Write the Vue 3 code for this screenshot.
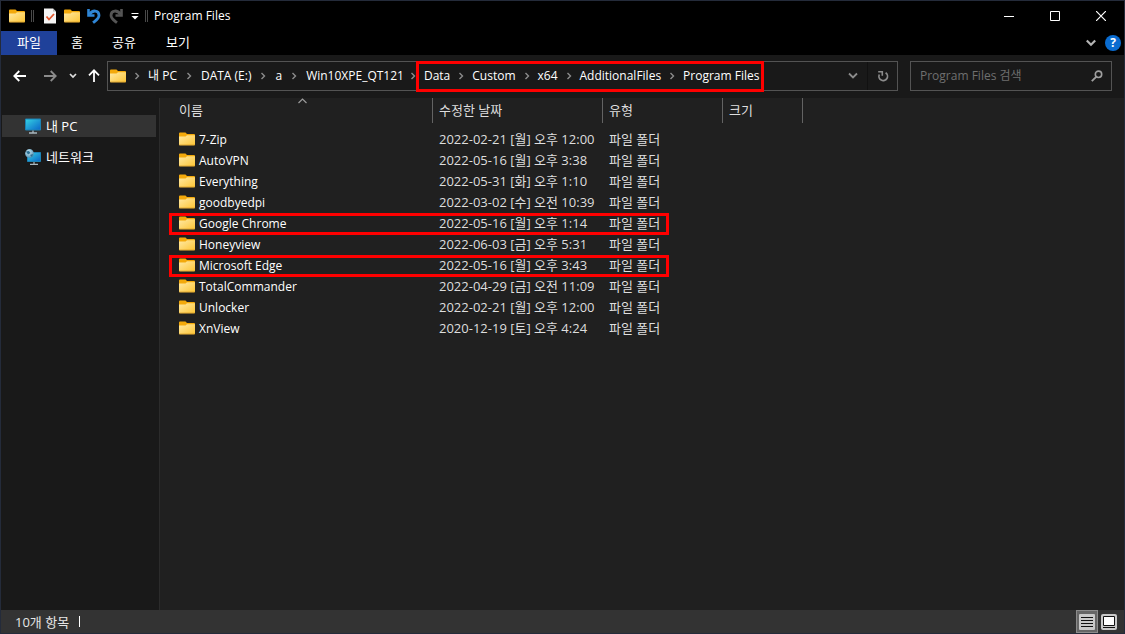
<script setup>
import { ref } from 'vue'

const rootCrumbs = ['내 PC', 'DATA (E:)', 'a', 'Win10XPE_QT121']
const markedCrumbs = ['Data', 'Custom', 'x64', 'AdditionalFiles', 'Program Files']

const tabs = [
  { name: '홈', cls: 'tab-home' },
  { name: '공유', cls: 'tab-share' },
  { name: '보기', cls: 'tab-view' },
]

const files = [
  { name: '7-Zip', date: '2022-02-21 [월] 오후 12:00' },
  { name: 'AutoVPN', date: '2022-05-16 [월] 오후 3:38' },
  { name: 'Everything', date: '2022-05-31 [화] 오후 1:10' },
  { name: 'goodbyedpi', date: '2022-03-02 [수] 오전 10:39' },
  { name: 'Google Chrome', date: '2022-05-16 [월] 오후 1:14', marked: true },
  { name: 'Honeyview', date: '2022-06-03 [금] 오후 5:31' },
  { name: 'Microsoft Edge', date: '2022-05-16 [월] 오후 3:43', marked: true },
  { name: 'TotalCommander', date: '2022-04-29 [금] 오전 11:09' },
  { name: 'Unlocker', date: '2022-02-21 [월] 오후 12:00' },
  { name: 'XnView', date: '2020-12-19 [토] 오후 4:24' },
]

const query = ref('')
</script>

<template>
  <div class="window">
    <svg class="defs" width="0" height="0" aria-hidden="true">
      <defs>
        <linearGradient id="folderFront" x1="0" y1="0" x2="1" y2="1">
          <stop offset="0" stop-color="#ffe9a4" />
          <stop offset="1" stop-color="#fdc535" />
        </linearGradient>
        <linearGradient id="screen" x1="0" y1="0" x2="1" y2="1">
          <stop offset="0" stop-color="#35d3e3" />
          <stop offset="1" stop-color="#0a66c8" />
        </linearGradient>
        <radialGradient id="globe" cx="0.4" cy="0.35" r="0.7">
          <stop offset="0" stop-color="#d5ecf5" />
          <stop offset="1" stop-color="#4389ae" />
        </radialGradient>
        <symbol id="folder" viewBox="0 0 16 14">
          <path d="M0 1.500a1 1 0 0 1 1-1h5.500l1.500 1.500H15a1 1 0 0 1 1 1V6H0z" fill="#f3a90b" />
          <path d="M0 4.500h6.500l1.500-1.300H16V12.500a.8.8 0 0 1-.8.8H.8a.8.8 0 0 1-.8-.8z" fill="url(#folderFront)" />
          <path d="M0.300 13h15.400" stroke="#dba02a" stroke-width="0.800" />
        </symbol>
        <symbol id="crumb" viewBox="0 0 6 8">
          <path d="M1.500 1l3 3-3 3" fill="none" stroke="#8c8c8c" stroke-width="1.400" />
        </symbol>
      </defs>
    </svg>

    <header class="titlebar">
      <svg class="folder" viewBox="0 0 16 14"><use href="#folder" /></svg>
      <span class="grip first"></span>
      <div class="quick">
        <button aria-label="속성">
          <svg width="14" height="16" viewBox="0 0 14 16">
            <path d="M1 0.500h9l3 3V15.500H1z" fill="#f4f4f4" />
            <path d="M10 0.500v3h3z" fill="#b9b9b9" />
            <path d="M3.500 8.500l2.500 3L11 6" fill="none" stroke="#e2562c" stroke-width="1.800" />
          </svg>
        </button>
        <button aria-label="새 폴더"><svg class="folder" viewBox="0 0 16 14"><use href="#folder" /></svg></button>
        <button aria-label="실행 취소">
          <svg width="14" height="16" viewBox="0 0 14 16" fill="none" stroke="#2f86d6" stroke-width="2.800">
            <path d="M1.500 1v6.500h6" stroke-width="2.600" />
            <path d="M2.500 6.500C5.500 1.500 11.800 2 12 7.200c.1 3.300-2.500 4.800-6 7.500" />
          </svg>
        </button>
        <button aria-label="다시 실행">
          <svg width="14" height="16" viewBox="0 0 14 16" fill="none" stroke="#555" stroke-width="2.800">
            <path d="M12.500 1v6.500h-6" stroke-width="2.600" />
            <path d="M11.500 6.500C8.500 1.500 2.200 2 2 7.200c-.1 3.300 2.500 4.800 6 7.500" />
          </svg>
        </button>
        <button class="more" aria-label="빠른 실행 도구 모음 사용자 지정">
          <svg width="8" height="8" viewBox="0 0 8 8"><path d="M0.500 1.500h7" stroke="#fff" /><path d="M0.500 4h7L4 7.500z" fill="#fff" /></svg>
        </button>
      </div>
      <span class="grip"></span>
      <h1>Program Files</h1>
      <div class="controls">
        <button aria-label="최소화"><svg width="10" height="10" viewBox="0 0 10 10"><path d="M0 5.500h10" stroke="#fff" /></svg></button>
        <button aria-label="최대화"><svg width="10" height="10" viewBox="0 0 10 10"><path d="M0.500 0.500h9v9h-9z" fill="none" stroke="#fff" /></svg></button>
        <button aria-label="닫기"><svg width="10" height="10" viewBox="0 0 10 10"><path d="M0 0l10 10M10 0L0 10" stroke="#fff" stroke-width="1.200" /></svg></button>
      </div>
    </header>

    <nav class="ribbon">
      <button class="tab tab-file">파일</button>
      <button v-for="t in tabs" :key="t.name" class="tab" :class="t.cls">{{ t.name }}</button>
      <div class="ribbon-end">
        <button aria-label="리본 확장"><svg width="10" height="8" viewBox="0 0 10 8"><path d="M0.800 1.500L5 5.700l4.200-4.200" fill="none" stroke="#b4b4b4" stroke-width="2.200" /></svg></button>
        <button class="help" aria-label="도움말">?</button>
      </div>
    </nav>

    <div class="navbar">
      <div class="arrows">
        <button aria-label="뒤로"><svg width="14" height="12" viewBox="0 0 14 12"><path d="M13 6H1.500M6.300 1L1.300 6l5 5" fill="none" stroke="#fff" stroke-width="1.800" /></svg></button>
        <button aria-label="앞으로"><svg width="14" height="12" viewBox="0 0 14 12"><path d="M1 6h11.500M7.700 1l5 5-5 5" fill="none" stroke="#8b8b8b" stroke-width="1.800" /></svg></button>
        <button aria-label="최근 위치"><svg width="8" height="6" viewBox="0 0 8 6"><path d="M1 1l3 3 3-3" fill="none" stroke="#dedede" stroke-width="1.700" /></svg></button>
        <button aria-label="위로"><svg width="12" height="14" viewBox="0 0 12 14"><path d="M6 13V1.500M1 6.300l5-5 5 5" fill="none" stroke="#fff" stroke-width="1.800" /></svg></button>
      </div>
      <div class="address">
        <svg class="folder" viewBox="0 0 16 14"><use href="#folder" /></svg>
        <template v-for="(c, i) in rootCrumbs" :key="c">
          <svg class="sep" :class="{ wide: i }"><use href="#crumb" /></svg>
          <a href="#">{{ c }}</a>
        </template>
        <svg class="sep last"><use href="#crumb" /></svg>
        <div class="marked-path">
          <template v-for="(c, i) in markedCrumbs" :key="c">
            <svg v-if="i" class="sep"><use href="#crumb" /></svg>
            <a href="#">{{ c }}</a>
          </template>
        </div>
        <button class="drop" aria-label="이전 위치"><svg width="10" height="8" viewBox="0 0 10 8"><path d="M1 1.500l4 4 4-4" fill="none" stroke="#8c8c8c" stroke-width="1.800" /></svg></button>
        <button class="refresh" aria-label="새로 고침">
          <svg width="12" height="12" viewBox="0 0 12 12"><path d="M8.600 2.700A4.300 4.300 0 1 1 2.300 4.500" fill="none" stroke="#8c8c8c" stroke-width="1.700" /><path d="M1.200 1.700h4.100V5.800" fill="none" stroke="#8c8c8c" stroke-width="1.600" /></svg>
        </button>
      </div>
      <div class="search">
        <input v-model="query" type="text" placeholder="Program Files 검색" aria-label="Program Files 검색" />
        <svg width="12" height="12" viewBox="0 0 12 12"><circle cx="7.500" cy="4.300" r="3.200" fill="none" stroke="#a0a0a0" stroke-width="1.600" /><path d="M5.200 6.800L0.800 11.200" stroke="#a0a0a0" stroke-width="1.900" /></svg>
      </div>
    </div>

    <div class="body">
      <aside>
        <a href="#" class="place selected">
          <svg width="16" height="16" viewBox="0 0 16 16">
            <path d="M0.500 1h15v11H0.500z" fill="url(#screen)" stroke="#1c82b4" />
            <path d="M8 12.500v2M4 15h8" stroke="#a9b8c0" stroke-width="1.300" />
          </svg>
          내 PC
        </a>
        <a href="#" class="place">
          <svg width="16" height="16" viewBox="0 0 16 16">
            <path d="M2.500 3.500h13v9h-13z" fill="url(#screen)" stroke="#1c82b4" />
            <path d="M9 13v2M5 15.300h8" stroke="#a9b8c0" stroke-width="1.200" />
            <circle cx="4.500" cy="4.500" r="4.400" fill="url(#globe)" />
            <path d="M1 2.500l3-.5 1.500 2L3 5.500zM5 6l3-1-1 3z" fill="#2a6d91" />
          </svg>
          네트워크
        </a>
      </aside>
      <main>
        <svg class="sort" width="9" height="6" viewBox="0 0 9 6"><path d="M0.500 5l4-4 4 4" fill="none" stroke="#9a9a9a" stroke-width="1.200" /></svg>
        <table>
          <thead>
            <tr>
              <th class="c-name"><div>이름</div></th>
              <th class="c-date"><div>수정한 날짜</div></th>
              <th class="c-type"><div>유형</div></th>
              <th class="c-size"><div>크기</div></th>
            </tr>
          </thead>
          <tbody>
            <tr v-for="f in files" :key="f.name" :class="{ marked: f.marked }">
              <td class="name"><span><svg class="folder" viewBox="0 0 16 14"><use href="#folder" /></svg>{{ f.name }}</span></td>
              <td>{{ f.date }}</td>
              <td>파일 폴더</td>
              <td></td>
            </tr>
          </tbody>
        </table>
      </main>
    </div>

    <footer>
      <span>10개 항목</span><i></i>
      <div class="views">
        <button class="on" aria-label="자세히">
          <svg width="16" height="16" viewBox="0 0 16 16"><rect width="16" height="16" rx="1" fill="#c9c9c9" /><path d="M2 3.500h12M2 6.500h12M2 9.500h12M2 12.500h12" stroke="#111" /></svg>
        </button>
        <button aria-label="큰 아이콘">
          <svg width="16" height="16" viewBox="0 0 16 16"><rect width="16" height="16" rx="2" fill="#c9c9c9" /><path d="M2.500 2.500h11v9h-11z" fill="#fff" stroke="#111" /><path d="M2 13.500h12" stroke="#111" /></svg>
        </button>
      </div>
    </footer>
  </div>
</template>

<style>
body {
  background: #191919;
}
</style>

<style scoped>
.window {
  display: flex;
  flex-direction: column;
  min-height: 100vh;
  box-sizing: border-box;
  border: 1px solid #242b3a;
  color: #fff;
  background: #191919;
  font: 12px/16px "Open Sans", "Noto Sans CJK KR", sans-serif;
}
.defs {
  position: absolute;
}
button {
  display: flex;
  align-items: center;
  justify-content: center;
  padding: 0;
  border: 0;
  background: none;
  color: inherit;
  font: inherit;
}
a {
  color: inherit;
  text-decoration: none;
  white-space: nowrap;
}
svg {
  display: block;
  flex: none;
}
.folder {
  width: 16px;
  height: 14px;
}
.titlebar {
  display: flex;
  align-items: center;
  height: 30px;
  padding-left: 8px;
  background: #000;
}
.grip {
  width: 1px;
  height: 12px;
  border: 1px solid #4a4a4a;
  border-width: 0 1px;
  margin: 0 6px 0 2px;
}
.grip.first {
  margin: 0 5px 0 6px;
}
.quick {
  display: flex;
}
.quick button {
  width: 22px;
}
.quick .more {
  width: 16px;
}
h1 {
  margin: 0;
  font-size: 12px;
  font-weight: 400;
}
.controls {
  display: flex;
  margin-left: auto;
}
.controls button {
  width: 46px;
  height: 28px;
}
.ribbon {
  display: flex;
  height: 24px;
  background: #000;
}
.tab {
  width: 54px;
  padding-bottom: 2px;
  font-size: 13px;
}
.tab-file {
  width: 56px;
  background: #1f419a;
}
.tab-home {
  width: 40px;
}
.ribbon-end {
  display: flex;
  align-items: center;
  gap: 9px;
  margin-left: auto;
  padding-right: 3px;
}
.help {
  width: 16px;
  height: 16px;
  border-radius: 50%;
  background: #0a6cd0;
  font-weight: 700;
}
.navbar {
  display: flex;
  padding: 6px 12px 7px 0;
}
.arrows {
  display: flex;
  align-items: center;
  width: 106px;
}
.arrows button {
  width: 30px;
  height: 30px;
}
.arrows button:first-child {
  margin-left: 4px;
}
.arrows button:nth-child(3) {
  width: 16px;
}
.arrows button:last-child {
  width: 26px;
}
.address {
  display: flex;
  flex: 1;
  align-items: center;
  height: 30px;
  box-sizing: border-box;
  border: 1px solid #535353;
  padding-left: 2px;
}
.sep {
  width: 6px;
  height: 8px;
  margin: 0 8px;
}
.sep.wide {
  margin: 0 9px;
}
.sep.last {
  margin: 0 3px 0 6px;
}
.marked-path {
  display: flex;
  align-items: center;
  height: 25px;
  padding: 0 2px 0 5px;
  outline: 3px solid #f00;
}
.drop {
  width: 28px;
  height: 28px;
  margin-left: auto;
}
.refresh {
  width: 30px;
  height: 28px;
  border-left: 1px solid #111;
}
.search {
  display: flex;
  align-items: center;
  width: 202px;
  height: 30px;
  box-sizing: border-box;
  margin-left: 12px;
  padding: 0 8px 0 9px;
  border: 1px solid #535353;
}
input {
  flex: 1;
  min-width: 0;
  padding: 0;
  border: 0;
  outline: 0;
  background: none;
  color: #fff;
  font: inherit;
}
input::placeholder {
  color: #6f6f6f;
}
.body {
  display: flex;
  flex: 1;
}
aside {
  display: flex;
  flex-direction: column;
  gap: 9px;
  width: 158px;
  padding-top: 17px;
  border-right: 1px solid #2b2b2b;
}
.place {
  display: flex;
  align-items: center;
  gap: 5px;
  height: 22px;
  margin: 0 3px 0 1px;
  padding-left: 23px;
  font-size: 13px;
}
.selected {
  background: #333;
}
main {
  position: relative;
  flex: 1;
  padding-left: 9px;
  background: #202020;
}
.sort {
  position: absolute;
  left: 138px;
  top: 0;
}
table {
  width: 634px;
  table-layout: fixed;
  border-collapse: collapse;
}
th {
  height: 31px;
  padding: 0;
  vertical-align: top;
  text-align: left;
  font-size: 13px;
  font-weight: 400;
  color: #dedede;
}
th div {
  height: 25px;
  border-right: 1px solid #636363;
  padding-left: 6px;
  line-height: 25px;
}
.c-name {
  width: 264px;
}
.c-date {
  width: 170px;
}
.c-type {
  width: 120px;
}
.c-size {
  width: 80px;
}
.c-name div {
  padding-left: 10px;
}
tbody tr {
  position: relative;
}
td {
  height: 19px;
  padding: 0 0 2px 6px;
  color: #dedede;
  font-size: 13px;
  line-height: 18px;
  white-space: nowrap;
}
td.name {
  height: 21px;
  padding: 0 0 0 10px;
  color: #fff;
  font-size: 12px;
  line-height: 20px;
}
.name span {
  display: flex;
  gap: 4px;
}
.name svg {
  margin-top: 2px;
}
.marked::after {
  content: "";
  position: absolute;
  left: 0;
  top: 0;
  width: 500px;
  height: 22px;
  box-sizing: border-box;
  border: 3px solid #f00;
}
footer {
  display: flex;
  align-items: center;
  height: 23px;
  padding-left: 14px;
  background: #333;
  color: #e6e6e6;
  font-size: 13px;
}
footer i {
  width: 1px;
  height: 11px;
  margin-left: 10px;
  background: #fff;
}
.views {
  display: flex;
  margin-left: auto;
  padding-right: 4px;
}
.views button {
  width: 22px;
  height: 23px;
  box-sizing: border-box;
}
.views .on {
  border: 1px solid #8b8b8b;
  background: #666;
}
</style>
